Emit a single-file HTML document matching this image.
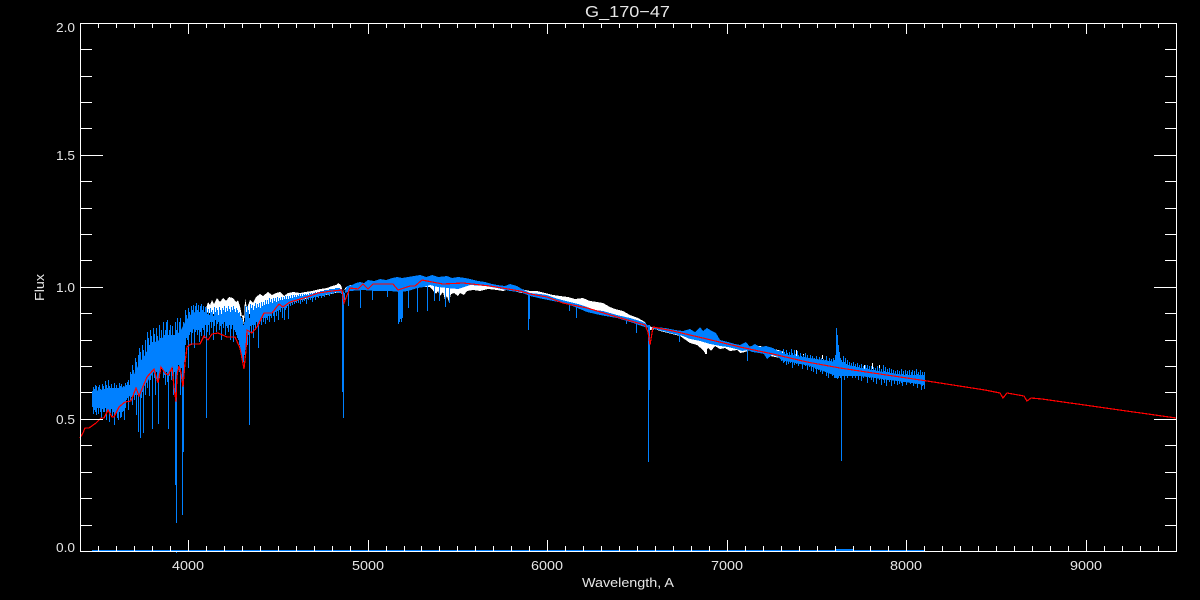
<!DOCTYPE html>
<html><head><meta charset="utf-8"><title>G_170-47</title>
<style>
html,body{margin:0;padding:0;background:#000;width:1200px;height:600px;overflow:hidden}
svg{display:block}
text{font-family:"Liberation Sans",sans-serif;fill:#e6e6e6;font-size:13px}
</style></head><body>
<svg width="1200" height="600" viewBox="0 0 1200 600" xmlns="http://www.w3.org/2000/svg">
<rect width="1200" height="600" fill="#000"/>
<g shape-rendering="crispEdges">
<!-- white spectrum -->
<path fill="#fff" d="M205,312 208,302 210,305 212,300 214,304 217,298 220,302 223,298 226,301 229,297 233,298 236,302 238,300 240,306 242,316 244,325 245,298 247,308 250,300 253,303 256,297 260,294 263,296 268,292 272,295 276,293 280,292 284,296 288,293 293,292 300,293 305,292 312,291 320,289 327,288 332,286 336,285 338,283 341,285 343,292 346,287 350,285 354,286 358,284 362,287 370,289 397,288 420,287 430,287 436,294 438,291 440,296 443,292 445,300 447,296 449,302 451,294 454,293 458,296 460,293 464,295 467,291 473,290 480,291 488,289 497,290 503,291 510,289 520,289 530,291 537,291 545,293 553,295 560,296 568,297 575,299 583,298 590,301 597,302 603,303 610,307 615,309 623,311 630,315 638,318 645,322 650,330 655,329 660,331 680,336 690,343 697,345 703,350 705,353 708,348 711,351 715,346 720,349 725,348 730,351 737,350 740,353 745,352 750,350 760,352 770,356 780,358 785,352 778,350 760,346 740,347 707,338 680,333 655,328 645,325 617,317 587,310 563,303 530,295 497,287 470,283 447,283 420,282 397,283 363,286 347,289 340,292 300,300 260,312 230,318 Z"/>
<path fill="#fff" d="M705,342h2v12h-2zM789,352h1v5h-1zM796,350h1v6h-1zM803,354h1v4h-1zM822,355h1v4h-1zM845,360h1v6h-1zM857,367h1v5h-1zM864,365h1v6h-1zM872,363h1v6h-1zM879,365h1v5h-1zM889,373h1v6h-1zM897,374h1v8h-1zM905,373h1v7h-1zM913,376h1v4h-1zM924,373h1v5h-1z"/>
<!-- blue band middle -->
<path fill="#0080ff" d="M345,291 347,286 352,285 356,283 360,282 364,283 368,280 374,281 380,279 386,280 392,278 397,277 402,278 408,277 414,276 420,275 426,277 432,275 438,277 447,276 452,278 458,277 465,278 470,279 478,281 485,282 492,284 497,285 505,286 510,284 517,286 522,289 530,293 540,294 547,295 555,298 562,300 570,302 578,304 587,307 595,310 603,311 617,315 630,318 640,321 645,323 650,328 655,327 665,328 675,330 683,331 690,329 695,332 700,327 703,331 707,328 712,331 716,333 720,340 728,342 735,344 740,345 746,342 750,347 755,344 760,347 766,346 773,348 778,351 781,351 781,360 778,357 772,355 767,359 764,354 759,353 752,352 748,350 742,351 736,349 728,347 720,346 710,344 700,341 690,339 683,336 670,333 655,329 645,327 630,322 617,318 600,315 587,312 575,307 563,303 553,301 543,299 530,296 520,292 510,291 497,288 485,286 470,285 458,289 447,288 438,287 430,285 424,287 417,288 408,291 400,292 390,291 375,291 363,290 350,291 345,293 Z"/>
<!-- core fill for dense regions -->
<path fill="#0080ff" d="M92,392 100,390 110,388 120,388 130,385 135,372 140,362 145,355 150,345 155,342 160,340 165,335 170,335 175,335 180,332 185,322 190,315 195,312 200,312 205,312 205,325 200,330 195,328 190,332 185,340 180,362 175,368 170,365 165,368 160,368 155,370 150,378 145,385 140,392 135,392 130,396 125,400 120,408 110,408 100,408 92,405 Z"/>
<path fill="#0080ff" d="M781,354 810,358 836,362 860,368 890,373 925,378 925,385 890,380 860,376 836,376 810,366 781,360 Z"/>
<!-- blue columns -->
<path stroke="#0080ff" fill="none" stroke-width="1" d="M92.5,391V407M93.5,387V414M94.5,389V410M95.5,385V412M96.5,386V415M97.5,392V408M98.5,387V414M99.5,385V408M100.5,389V412M101.5,392V418M102.5,384V409M103.5,386V412M104.5,390V412M105.5,381V408M106.5,385V420M107.5,388V412M108.5,380V411M109.5,386V422M110.5,388V413M111.5,384V409M112.5,388V416M113.5,390V412M114.5,383V425M115.5,389V414M116.5,385V412M117.5,388V418M118.5,393V420M119.5,383V412M120.5,386V418M121.5,384V417M122.5,391V412M123.5,386V411M124.5,388V420M125.5,383V408M126.5,385V400M127.5,382V398M128.5,380V410M129.5,386V396M130.5,372V400M131.5,374V397M132.5,365V405M133.5,370V392M134.5,377V400M135.5,358V395M136.5,362V415M137.5,370V395M138.5,355V432M139.5,348V395M140.5,352V438M141.5,362V398M142.5,345V392M143.5,350V433M144.5,358V385M145.5,340V395M146.5,352V380M147.5,332V388M148.5,338V378M149.5,345V396M150.5,330V380M151.5,336V375M152.5,342V429M153.5,328V370M154.5,334V378M155.5,345V395M156.5,328V372M157.5,336V382M158.5,350V424M159.5,325V378M160.5,338V372M161.5,330V368M162.5,345V370M163.5,322V378M164.5,335V375M165.5,330V385M166.5,322V372M167.5,320V382M168.5,345V429M169.5,330V376M170.5,325V370M171.5,338V380M172.5,326V368M173.5,335V395M174.5,345V372M175.5,322V485M176.5,330V523M177.5,318V375M178.5,340V365M179.5,322V372M180.5,318V395M181.5,330V368M182.5,335V515M183.5,322V452M184.5,340V362M185.5,310V345M186.5,315V338M187.5,322V340M188.5,308V368M189.5,312V335M190.5,318V332M191.5,306V345M192.5,310V333M193.5,305V328M194.5,314V348M195.5,306V332M196.5,303V330M197.5,310V335M198.5,305V330M199.5,312V342M200.5,306V332M201.5,304V336M202.5,310V328M203.5,306V330M204.5,312V338M205.5,307V325M206.5,308V418M207.5,314V332M208.5,309V325M209.5,315V335M210.5,308V322M211.5,312V328M212.5,310V322M213.5,316V340M214.5,307V326M215.5,312V320M216.5,308V332M217.5,310V324M218.5,315V322M219.5,307V330M220.5,310V326M221.5,314V340M222.5,308V324M223.5,310V328M224.5,306V322M225.5,312V335M226.5,308V326M227.5,311V328M228.5,306V332M229.5,309V325M230.5,312V340M231.5,307V329M232.5,310V325M233.5,306V342M234.5,309V330M235.5,312V332M236.5,308V335M237.5,310V338M238.5,313V340M239.5,312V345M240.5,316V350M241.5,318V355M242.5,320V360M243.5,325V362M244.5,322V355M245.5,306V350M246.5,312V345M247.5,306V345M248.5,310V335M249.5,318V425M250.5,304V326M251.5,308V332M252.5,305V325M253.5,310V338M254.5,306V325M255.5,303V330M256.5,308V322M257.5,304V326M258.5,307V348M259.5,303V324M260.5,308V320M261.5,302V325M262.5,306V318M263.5,302V322M264.5,305V318M265.5,300V324M266.5,304V318M267.5,300V320M268.5,304V316M269.5,298V322M270.5,302V316M271.5,299V318M272.5,303V312M273.5,298V316M274.5,301V322M275.5,298V312M276.5,302V316M277.5,297V311M278.5,301V320M279.5,298V310M280.5,300V312M281.5,297V308M282.5,300V318M283.5,297V308M284.5,299V320M285.5,296V310M286.5,299V308M287.5,296V306M288.5,299V319M289.5,296V304M290.5,298V306M291.5,295V302M292.5,298V305M293.5,295V302M294.5,297V304M295.5,295V300M296.5,297V303M297.5,295V300M298.5,296V303M299.5,294V300M300.5,296V304M301.5,294V299M302.5,296V302M303.5,294V299M304.5,295V301M305.5,294V298M306.5,295V304M307.5,294V298M308.5,295V300M309.5,293V298M310.5,294V300M311.5,293V298M312.5,294V302M313.5,293V298M314.5,293V297M315.5,292V300M316.5,293V297M317.5,292V296M318.5,292V298M319.5,292V296M320.5,291V296M321.5,291V298M322.5,291V296M323.5,291V295M324.5,290V297M325.5,290V295M326.5,290V294M327.5,290V295M328.5,290V294M329.5,289V296M330.5,289V294M331.5,289V293M332.5,289V294M333.5,289V293M334.5,289V293M335.5,288V292M336.5,288V293M337.5,288V292M338.5,288V292M339.5,288V293M340.5,289V293M341.5,289V294M342.5,291V392M343.5,292V418M344.5,293V300M648.5,325V462M649.5,325V390M348.5,290V306M360.5,290V308M372.5,290V300M387.5,290V297M398.5,290V324M399.5,290V322M400.5,290V319M401.5,290V322M402.5,290V318M408.5,290V308M417.5,288V312M427.5,285V311M434.5,285V301M439.5,285V301M445.5,285V307M449.5,285V303M528.5,295V330M529.5,295V319M569.5,303V311M576.5,305V318M626.5,318V324M636.5,322V333M679.5,334V342M747.5,348V361M841.5,375V461"/>
<path stroke="#0080ff" fill="none" stroke-width="1" d="M781.5,351V361M782.5,353V360M783.5,349V363M784.5,352V362M785.5,354V361M786.5,350V365M787.5,353V361M788.5,356V364M789.5,352V360M790.5,355V363M791.5,349V362M792.5,353V368M793.5,355V362M794.5,350V365M795.5,354V362M796.5,356V364M797.5,351V361M798.5,355V366M799.5,357V363M800.5,353V364M801.5,356V363M802.5,358V369M803.5,355V363M804.5,357V365M805.5,353V366M806.5,358V364M807.5,355V370M808.5,358V365M809.5,360V367M810.5,355V364M811.5,359V371M812.5,356V366M813.5,360V372M814.5,358V366M815.5,361V369M816.5,356V374M817.5,360V366M818.5,362V370M819.5,357V368M820.5,361V372M821.5,358V367M822.5,362V374M823.5,359V368M824.5,362V371M825.5,360V369M826.5,356V376M827.5,361V370M828.5,364V378M829.5,358V371M830.5,362V374M831.5,359V370M832.5,363V376M833.5,358V372M834.5,360V378M835.5,355V378M836.5,328V378M837.5,335V379M838.5,345V378M839.5,352V374M840.5,358V378M841.5,360V375M842.5,362V376M843.5,356V374M844.5,362V380M845.5,358V376M846.5,364V374M847.5,360V378M848.5,365V373M849.5,362V376M850.5,366V372M851.5,363V375M852.5,367V378M853.5,362V376M854.5,366V372M855.5,364V378M856.5,368V375M857.5,363V374M858.5,367V380M859.5,365V376M860.5,368V374M861.5,364V381M862.5,368V376M863.5,366V378M864.5,369V375M865.5,365V374M866.5,368V377M867.5,365V383M868.5,369V376M869.5,366V378M870.5,370V375M871.5,366V380M872.5,370V376M873.5,367V382M874.5,370V378M875.5,368V376M876.5,371V384M877.5,366V378M878.5,371V376M879.5,368V380M880.5,372V378M881.5,369V385M882.5,372V377M883.5,365V380M884.5,371V383M885.5,367V378M886.5,372V386M887.5,369V380M888.5,372V378M889.5,368V382M890.5,373V377M891.5,369V386M892.5,373V380M893.5,370V378M894.5,374V384M895.5,371V380M896.5,374V378M897.5,370V385M898.5,375V381M899.5,371V384M900.5,375V380M901.5,369V383M902.5,374V386M903.5,371V380M904.5,375V382M905.5,370V378M906.5,374V385M907.5,371V380M908.5,375V382M909.5,370V378M910.5,375V384M911.5,372V381M912.5,370V378M913.5,375V386M914.5,371V381M915.5,375V384M916.5,369V380M917.5,374V388M918.5,372V381M919.5,375V384M920.5,370V380M921.5,375V390M922.5,372V386M923.5,375V385M924.5,372V389"/>
<path fill="#0080ff" d="M92,550h833v1H92z"/>
<path fill="#0080ff" d="M835,549h18v1h-18zM176,551h1v2h-1z"/>
</g>
<!-- red model -->
<path fill="none" stroke="#f00" stroke-width="1.2" stroke-linejoin="miter" shape-rendering="crispEdges" d="M80,438 83,433 85,428 89,428 96,423 101,418 104,418 108,410 112,417 114,417 119,407 125,402 131,401 136,388 139,396 147,377 154,369 158,383 161,367 165,373 168,375 172,368 174,387 176,402 177,375 179,366 181,373 183,387 185,363 187,347 191,344 200,344 204,336 208,340 212,334 218,333 227,337 235,337 240,348 244,369 246,350 247,330 252,333 257,327 264,313 272,313 279,304 283,307 290,302 307,297 318,293 332,291 342,290 344,303 350,288 358,289 363,284 368,289 373,284 378,284 393,284 398,290 410,286 415,286 422,280 432,282 443,284 463,283 490,286 520,291 530,294 547,297 563,303 587,308 617,317 645,325 648,332 650,345 653,327 673,331 707,339 740,347 773,354 807,362 840,368 873,373 907,378 927,381 940,383 985,390 1000,393 1003,398 1007,393 1024,396 1027,401 1031,398 1042,399 1176,418"/>
<!-- axes -->
<g shape-rendering="crispEdges" fill="none" stroke="#fff" stroke-width="1">
<path d="M80.5,23.5H1176.5V551.5H80.5Z"/>
<path d="M98.5,23v5M116.5,23v5M134.5,23v5M152.5,23v5M170.5,23v5M188.5,23v11M206.5,23v5M224.5,23v5M242.5,23v5M260.5,23v5M278.5,23v5M296.5,23v5M314.5,23v5M332.5,23v5M350.5,23v5M368.5,23v11M386.5,23v5M404.5,23v5M421.5,23v5M439.5,23v5M457.5,23v5M475.5,23v5M493.5,23v5M511.5,23v5M529.5,23v5M547.5,23v11M565.5,23v5M583.5,23v5M601.5,23v5M619.5,23v5M637.5,23v5M655.5,23v5M673.5,23v5M691.5,23v5M709.5,23v5M727.5,23v11M745.5,23v5M763.5,23v5M781.5,23v5M799.5,23v5M817.5,23v5M835.5,23v5M853.5,23v5M870.5,23v5M888.5,23v5M906.5,23v11M924.5,23v5M942.5,23v5M960.5,23v5M978.5,23v5M996.5,23v5M1014.5,23v5M1032.5,23v5M1050.5,23v5M1068.5,23v5M1086.5,23v11M1104.5,23v5M1122.5,23v5M1140.5,23v5M1158.5,23v5"/>
<path d="M98.5,552v-6M116.5,552v-6M134.5,552v-6M152.5,552v-6M170.5,552v-6M188.5,552v-12M206.5,552v-6M224.5,552v-6M242.5,552v-6M260.5,552v-6M278.5,552v-6M296.5,552v-6M314.5,552v-6M332.5,552v-6M350.5,552v-6M368.5,552v-12M386.5,552v-6M404.5,552v-6M421.5,552v-6M439.5,552v-6M457.5,552v-6M475.5,552v-6M493.5,552v-6M511.5,552v-6M529.5,552v-6M547.5,552v-12M565.5,552v-6M583.5,552v-6M601.5,552v-6M619.5,552v-6M637.5,552v-6M655.5,552v-6M673.5,552v-6M691.5,552v-6M709.5,552v-6M727.5,552v-12M745.5,552v-6M763.5,552v-6M781.5,552v-6M799.5,552v-6M817.5,552v-6M835.5,552v-6M853.5,552v-6M870.5,552v-6M888.5,552v-6M906.5,552v-12M924.5,552v-6M942.5,552v-6M960.5,552v-6M978.5,552v-6M996.5,552v-6M1014.5,552v-6M1032.5,552v-6M1050.5,552v-6M1068.5,552v-6M1086.5,552v-12M1104.5,552v-6M1122.5,552v-6M1140.5,552v-6M1158.5,552v-6"/>
<path d="M80,49.5h12M80,76.5h12M80,102.5h12M80,128.5h12M80,155.5h23M80,181.5h12M80,208.5h12M80,234.5h12M80,260.5h12M80,287.5h23M80,313.5h12M80,340.5h12M80,366.5h12M80,392.5h12M80,419.5h23M80,445.5h12M80,472.5h12M80,498.5h12M80,525.5h12"/>
<path d="M1177,49.5h-12M1177,76.5h-12M1177,102.5h-12M1177,128.5h-12M1177,155.5h-23M1177,181.5h-12M1177,208.5h-12M1177,234.5h-12M1177,260.5h-12M1177,287.5h-23M1177,313.5h-12M1177,340.5h-12M1177,366.5h-12M1177,392.5h-12M1177,419.5h-23M1177,445.5h-12M1177,472.5h-12M1177,498.5h-12M1177,525.5h-12"/>
</g>
<!-- labels -->
<text x="56" y="32" textLength="19" lengthAdjust="spacingAndGlyphs">2.0</text>
<text x="56" y="160" textLength="19" lengthAdjust="spacingAndGlyphs">1.5</text>
<text x="56" y="292" textLength="19" lengthAdjust="spacingAndGlyphs">1.0</text>
<text x="56" y="424" textLength="19" lengthAdjust="spacingAndGlyphs">0.5</text>
<text x="56" y="552" textLength="19" lengthAdjust="spacingAndGlyphs">0.0</text>
<text x="172" y="570" textLength="32" lengthAdjust="spacingAndGlyphs">4000</text>
<text x="352" y="570" textLength="32" lengthAdjust="spacingAndGlyphs">5000</text>
<text x="531" y="570" textLength="32" lengthAdjust="spacingAndGlyphs">6000</text>
<text x="711" y="570" textLength="32" lengthAdjust="spacingAndGlyphs">7000</text>
<text x="890" y="570" textLength="32" lengthAdjust="spacingAndGlyphs">8000</text>
<text x="1070" y="570" textLength="32" lengthAdjust="spacingAndGlyphs">9000</text>
<text x="582" y="587" textLength="92" lengthAdjust="spacingAndGlyphs">Wavelength, A</text>
<text x="0" y="0" transform="translate(44,301) rotate(-90)" textLength="27" lengthAdjust="spacingAndGlyphs">Flux</text>
<text x="585" y="17" textLength="85" lengthAdjust="spacingAndGlyphs" style="font-size:16px">G_170−47</text>
</svg>
</body></html>
